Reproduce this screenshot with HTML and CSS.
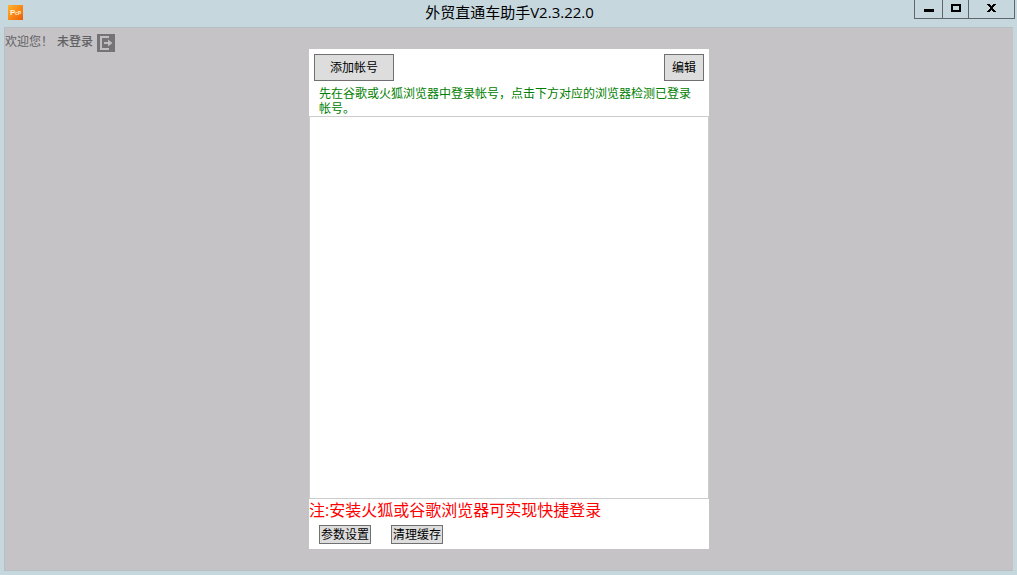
FILE: index.html
```html
<!DOCTYPE html>
<html lang="zh-CN">
<head>
<meta charset="utf-8">
<title>外贸直通车助手V2.3.22.0</title>
<link rel="stylesheet" href="styles.css">
</head>
<body>
<div class="window">
  <header class="titlebar">
    <svg class="app-icon" viewBox="0 0 15 15" aria-hidden="true">
      <defs><linearGradient id="g" x1="0" y1="0" x2="1" y2="1"><stop offset="0" stop-color="#ffb52e"/><stop offset=".5" stop-color="#fb8a16"/><stop offset="1" stop-color="#e95c0c"/></linearGradient></defs>
      <rect width="15" height="15" fill="url(#g)"/>
      <text class="logo-large" x="2" y="10">P</text>
      <text class="logo-small" x="7" y="10">cP</text>
    </svg>
    <h1 class="title">外贸直通车助手V2.3.22.0</h1>
    <div class="controls">
      <button class="control" type="button" aria-label="最小化"><svg width="10" height="9" viewBox="0 0 10 9"><path d="M0 6h10v3H0z"/></svg></button>
      <button class="control control-max" type="button" aria-label="最大化"><svg width="10" height="8" viewBox="0 0 10 8"><path fill-rule="evenodd" d="M0 0h10v8H0zM2 2v4h6V2z"/></svg></button>
      <button class="control control-close" type="button" aria-label="关闭"><svg width="9" height="8" viewBox="0 0 9 8"><path d="M0 0h3v1h1v1h1V1h1V0h3v1H8v1H7v1H6v2h1v1h1v1h1v1H6V7H5V6H4v1H3v1H0V7h1V6h1V5h1V3H2V2H1V1H0z"/></svg></button>
    </div>
  </header>
  <main class="client">
    <div class="greeting">
      <p class="greeting-text">欢迎您！<strong class="user">未登录</strong></p>
      <button class="logout" type="button" aria-label="退出"><svg width="18" height="18" viewBox="0 0 18 18"><rect width="18" height="18" fill="#747376"/><path d="M12 3H4v12h8" fill="none" stroke="#c0bec1" stroke-width="2"/><path d="M7 8h4V5.500L15.500 9L11 12.500V10H7z" fill="#c0bec1"/></svg></button>
    </div>
    <section class="panel">
      <div class="toolbar">
        <button class="button button-add" type="button">添加帐号</button>
        <button class="button button-edit" type="button">编辑</button>
      </div>
      <p class="hint">先在谷歌或火狐浏览器中登录帐号，点击下方对应的浏览器检测已登录帐号。</p>
      <div class="accounts"></div>
      <p class="note">注:安装火狐或谷歌浏览器可实现快捷登录</p>
      <div class="actions">
        <button class="button button-small" type="button">参数设置</button>
        <button class="button button-small" type="button">清理缓存</button>
      </div>
    </section>
  </main>
</div>
</body>
</html>
```

FILE: styles.css
```css
* { box-sizing: border-box; }
body {
  margin: 0;
  font: 12px/15px "Open Sans", "Noto Sans CJK SC", sans-serif;
  color: #000;
}
h1, p { margin: 0; }
button {
  margin: 0;
  padding: 0;
  font: inherit;
  color: inherit;
  border: 0;
  background: none;
}
svg { display: block; }
.window {
  display: flex;
  flex-direction: column;
  min-height: 100vh;
  padding: 0 2px 4px 4px;
  background: #c6d7de;
}
.titlebar {
  display: grid;
  grid-template-columns: 1fr auto 1fr;
  height: 27px;
}
.app-icon {
  width: 15px;
  height: 15px;
  margin: 5px 0 0 4px;
}
.logo-large, .logo-small {
  font-family: "Liberation Sans", sans-serif;
  font-weight: 700;
  fill: #fff3dc;
}
.logo-large { font-size: 8px; }
.logo-small { font-size: 5px; }
.title {
  font-size: 15px;
  font-weight: 400;
  line-height: 24px;
}
.controls {
  display: flex;
  justify-self: end;
  height: 19px;
  border: 1px solid #5f676b;
  border-top: 0;
}
.control {
  display: flex;
  justify-content: center;
  width: 27px;
  padding-top: 3px;
}
.control-max {
  padding-top: 4px;
  border: 1px solid #5f676b;
  border-width: 0 1px;
}
.control-close {
  width: 45px;
  padding-top: 4px;
}
.client {
  flex: 1;
  display: grid;
  place-items: center;
  margin-right: 2px;
  border: 1px solid #b7bfc6;
  border-right: 0;
  background: #c5c3c6;
}
.greeting, .panel { grid-area: 1 / 1; }
.greeting {
  display: flex;
  place-self: start;
  margin-top: 6px;
  color: #626164;
}
.user {
  margin: 0 4px;
  font-weight: 500;
}
.panel {
  display: flex;
  flex-direction: column;
  width: 400px;
  min-height: 500px;
  background: #fff;
}
.toolbar {
  display: flex;
  justify-content: space-between;
  padding: 5px;
}
.button {
  border: 1px solid #707070;
  background: #ddd;
}
.button-add { width: 80px; height: 27px; }
.button-edit { width: 40px; }
.hint {
  padding: 0 10px;
  color: #008000;
}
.accounts {
  flex: 1;
  border: 1px solid #ccc;
}
.note {
  padding-bottom: 2px;
  font-size: 16px;
  line-height: 22px;
  color: #f00;
}
.actions {
  display: flex;
  gap: 20px;
  padding: 2px 10px 5px;
}
.button-small {
  width: 52px;
  height: 19px;
}
```
